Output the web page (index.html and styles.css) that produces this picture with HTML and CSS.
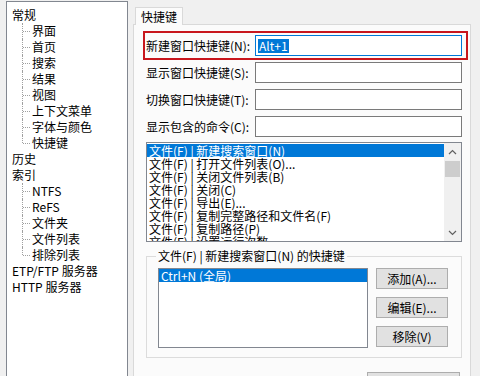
FILE: index.html
```html
<!DOCTYPE html>
<html lang="zh-CN">
<head>
<meta charset="utf-8">
<title>选项 - 快捷键</title>
<link rel="stylesheet" href="styles.css">
</head>
<body>
<div class="app">
  <ul class="tree">
    <li class="root">常规</li>
    <li class="child">界面</li>
    <li class="child">首页</li>
    <li class="child">搜索</li>
    <li class="child">结果</li>
    <li class="child">视图</li>
    <li class="child">上下文菜单</li>
    <li class="child">字体与颜色</li>
    <li class="child last">快捷键</li>
    <li class="root">历史</li>
    <li class="root">索引</li>
    <li class="child">NTFS</li>
    <li class="child">ReFS</li>
    <li class="child">文件夹</li>
    <li class="child">文件列表</li>
    <li class="child last">排除列表</li>
    <li class="root">ETP/FTP 服务器</li>
    <li class="root">HTTP 服务器</li>
  </ul>
  <div class="panel">
    <div class="tabs"><div class="tab">快捷键</div></div>
    <div class="page">
      <div class="fields">
        <div class="row highlight">
          <label class="lbl">新建窗口快捷键(N):</label>
          <div class="input focused"><span class="sel">Alt+1</span></div>
        </div>
        <div class="row">
          <label class="lbl">显示窗口快捷键(S):</label>
          <div class="input"></div>
        </div>
        <div class="row">
          <label class="lbl">切换窗口快捷键(T):</label>
          <div class="input"></div>
        </div>
        <div class="row">
          <label class="lbl">显示包含的命令(C):</label>
          <div class="input"></div>
        </div>
      </div>
      <div class="list">
        <div class="items">
          <div class="item selected">文件(F) | 新建搜索窗口(N)</div>
          <div class="item">文件(F) | 打开文件列表(O)...</div>
          <div class="item">文件(F) | 关闭文件列表(B)</div>
          <div class="item">文件(F) | 关闭(C)</div>
          <div class="item">文件(F) | 导出(E)...</div>
          <div class="item">文件(F) | 复制完整路径和文件名(F)</div>
          <div class="item">文件(F) | 复制路径(P)</div>
          <div class="item">文件(F) | 设置运行次数...</div>
        </div>
        <div class="scrollbar">
          <div class="arrow">
            <svg width="9" height="6" viewBox="0 0 9 6"><polyline points="1,5 4.5,1.5 8,5" fill="none" stroke="#606060" stroke-width="1.2"/></svg>
          </div>
          <div class="track"><div class="thumb"></div></div>
          <div class="arrow">
            <svg width="9" height="6" viewBox="0 0 9 6"><polyline points="1,1 4.5,4.5 8,1" fill="none" stroke="#606060" stroke-width="1.2"/></svg>
          </div>
        </div>
      </div>
      <fieldset class="group">
        <legend>文件(F) | 新建搜索窗口(N) 的快捷键</legend>
        <div class="group-body">
          <div class="list small">
            <div class="items">
              <div class="item selected">Ctrl+N (全局)</div>
            </div>
          </div>
          <div class="buttons">
            <button class="btn">添加(A)...</button>
            <button class="btn">编辑(E)...</button>
            <button class="btn">移除(V)</button>
          </div>
        </div>
      </fieldset>
      <button class="btn wide" aria-label="恢复为默认"></button>
    </div>
  </div>
</div>
</body>
</html>
```
FILE: styles.css
```css
html, body {
  margin: 0;
  padding: 0;
  overflow: hidden;
}
body {
  width: 480px;
  height: 376px;
  background: #f0f0f0;
  font-family: "Noto Sans CJK SC", "Noto Sans", sans-serif;
  font-size: 12px;
  color: #000;
}
.app {
  display: flex;
  height: 376px;
  padding: 1px 0 0 6px;
  box-sizing: border-box;
}

/* tree */
.tree {
  list-style: none;
  margin: 0;
  padding: 5px 0 0 0;
  width: 122px;
  flex: none;
  box-sizing: border-box;
  background: #fff;
  border: 1px solid #828790;
  border-bottom: none;
}
.tree li {
  position: relative;
  height: 16px;
  line-height: 16px;
  white-space: nowrap;
}
.root { padding-left: 5px; }
.child { padding-left: 25px; }
.child::before {
  content: "";
  position: absolute;
  left: 15px;
  top: 0;
  height: 16px;
  border-left: 1px dotted #a0a0a0;
}
.child.last::before { height: 8px; }
.child::after {
  content: "";
  position: absolute;
  left: 16px;
  top: 8px;
  width: 7px;
  border-top: 1px dotted #a0a0a0;
}

/* panel */
.panel {
  margin-left: 5px;
  padding-top: 6px;
  width: 338px;
  flex: none;
  display: flex;
  flex-direction: column;
  box-sizing: border-box;
  height: 375px;
}
.tabs {
  display: flex;
  padding-left: 2px;
  flex: none;
}
.tab {
  position: relative;
  z-index: 1;
  width: 48px;
  height: 18px;
  box-sizing: border-box;
  margin-bottom: -1px;
  padding-left: 5px;
  line-height: 17px;
  border: 1px solid #d9d9d9;
  border-bottom: none;
  background: #fbfbfb;
}
.page {
  flex: 1;
  min-height: 0;
  overflow: hidden;
  border: 1px solid #d9d9d9;
  border-bottom: none;
  background: #fbfbfb;
  padding: 10px 8px 0 12px;
}

/* fields */
.fields {
  display: flex;
  flex-direction: column;
  gap: 6px;
}
.row {
  position: relative;
  display: grid;
  grid-template-columns: 109px 207px;
  height: 21px;
  align-items: center;
}
.highlight::after {
  content: "";
  position: absolute;
  left: -3px;
  right: -6px;
  top: -4px;
  bottom: -4px;
  border: 2px solid #c8161d;
  pointer-events: none;
}
.lbl {
  white-space: nowrap;
  line-height: 21px;
}
.input {
  height: 21px;
  box-sizing: border-box;
  border: 1px solid #7a7a7a;
  background: #fff;
  display: flex;
  align-items: center;
  padding-left: 2px;
}
.input.focused {
  border-color: #0078d7;
}
.sel {
  background: #0078d7;
  color: #fff;
  line-height: 14px;
  padding: 0 1px;
}

/* lists */
.list {
  margin-top: 5px;
  height: 100px;
  box-sizing: border-box;
  border: 1px solid #828790;
  background: #fff;
  display: flex;
  overflow: hidden;
}
.items {
  flex: 1;
  padding-top: 1px;
  overflow: hidden;
}
.item {
  height: 13px;
  line-height: 13px;
  padding-left: 2px;
  white-space: nowrap;
}
.item.selected {
  background: #0078d7;
  color: #fff;
}
.scrollbar {
  width: 17px;
  flex: none;
  background: #f0f0f0;
  display: flex;
  flex-direction: column;
}
.arrow {
  height: 17px;
  display: flex;
  align-items: center;
  justify-content: center;
}
.track {
  flex: 1;
  padding: 1px 1px 0 1px;
}
.thumb {
  height: 16px;
  background: #cdcdcd;
}

/* group */
.group {
  margin: 7px 0 0 0;
  padding: 5px 13px 9px 11px;
  border: 1px solid #dcdcdc;
  min-inline-size: 0;
}
.group legend {
  padding: 0 2px;
  margin-left: -2px;
  line-height: 14px;
  white-space: nowrap;
}
.group-body {
  display: flex;
  gap: 8px;
}
.list.small {
  margin-top: 0;
  width: 210px;
  height: 80px;
  overflow: visible;
}
.list.small .items {
  padding-top: 0;
  overflow: visible;
}
.buttons {
  display: flex;
  flex-direction: column;
  gap: 8px;
}
.btn {
  width: 72px;
  height: 21px;
  box-sizing: border-box;
  padding: 0;
  border: 1px solid #adadad;
  background: #e1e1e1;
  font: inherit;
  line-height: 19px;
  color: #000;
  text-align: center;
}
.btn.wide {
  display: block;
  width: 93px;
  margin: 14px 0 0 221px;
}
```
